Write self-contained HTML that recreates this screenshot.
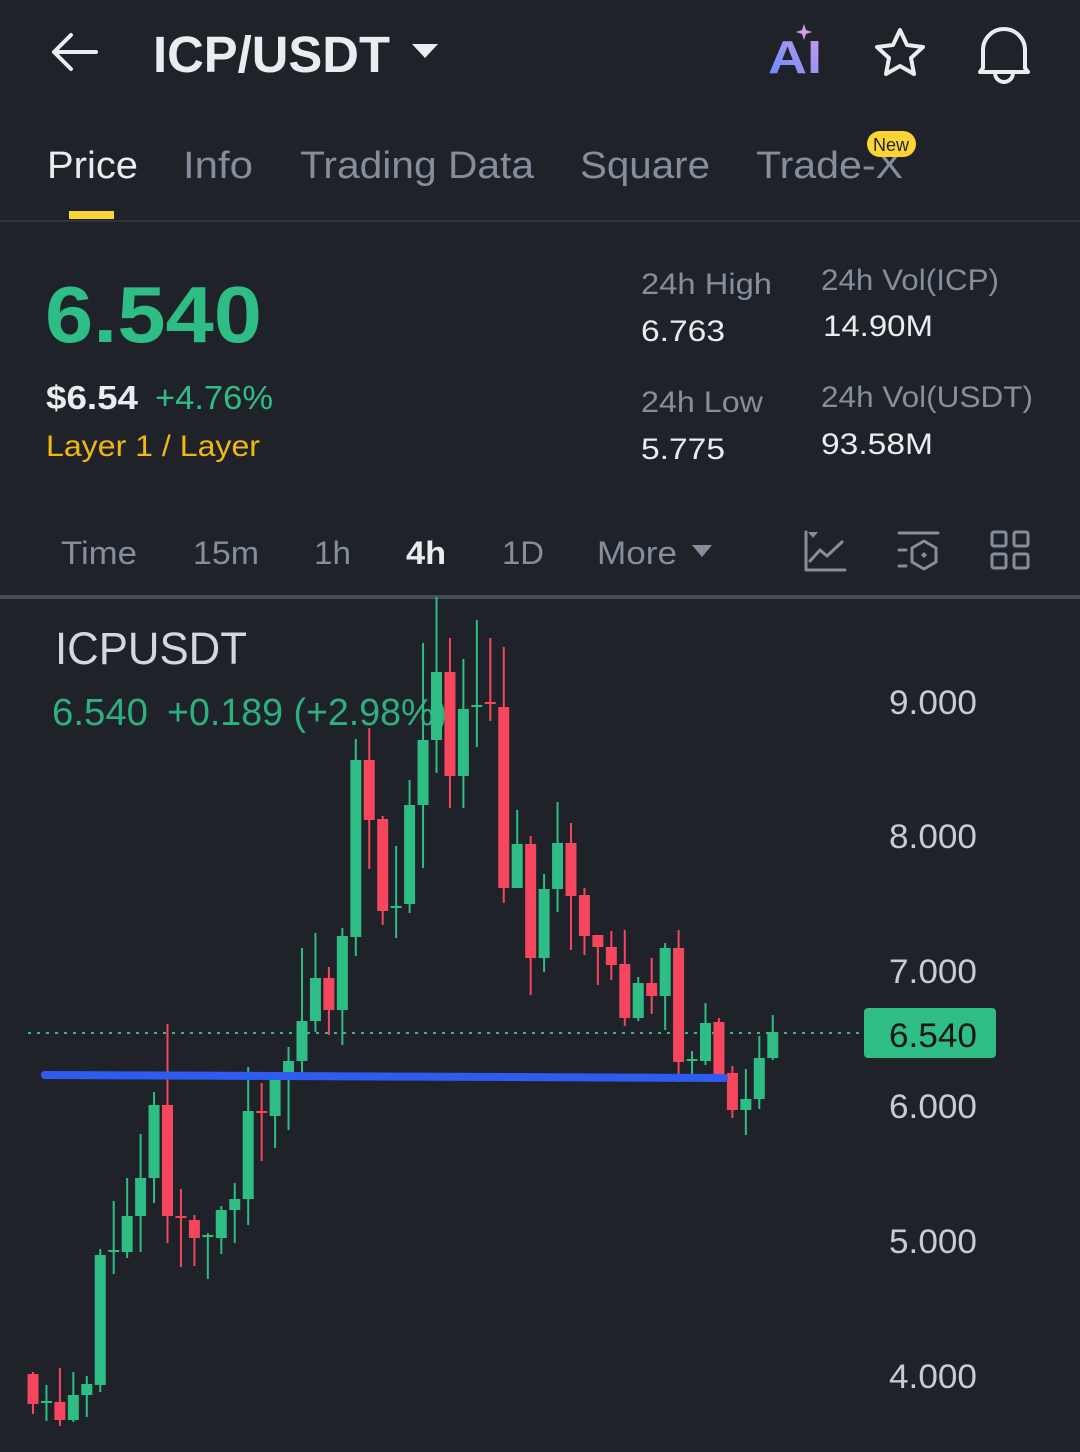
<!DOCTYPE html>
<html><head><meta charset="utf-8">
<style>
html,body{margin:0;padding:0;background:#1f2329;}
body{width:1080px;height:1452px;overflow:hidden;}
svg{display:block;font-family:"Liberation Sans",sans-serif;}
</style></head>
<body>
<svg id="s" width="1080" height="1452" viewBox="0 0 1080 1452" xmlns="http://www.w3.org/2000/svg">
<rect width="1080" height="1452" fill="#1f2329"/>
<path d="M96 52H54M54 52L71 35M54 52L71 69" stroke="#eaecef" stroke-width="4" fill="none" stroke-linecap="round" stroke-linejoin="round"/>
<text x="153" y="72" font-size="51" font-weight="700" fill="#eaecef" textLength="237" lengthAdjust="spacingAndGlyphs">ICP/USDT</text>
<path d="M412 44H438L425 58Z" fill="#eaecef"/>
<defs><linearGradient id="ai" x1="0" y1="1" x2="1" y2="0"><stop offset="0" stop-color="#5b8cff"/><stop offset="1" stop-color="#d59ae8"/></linearGradient></defs>
<text x="768" y="73" font-size="46" font-weight="700" fill="url(#ai)" textLength="54" lengthAdjust="spacingAndGlyphs">AI</text>
<path d="M804 24L806 30L812 32L806 34L804 40L802 34L796 32L802 30Z" fill="#d49be6"/>
<path d="M900 30L907 45L923 47L911 58L914 74L900 66L886 74L889 58L877 47L893 45Z" stroke="#eaecef" stroke-width="4" fill="none" stroke-linejoin="round"/>
<path d="M983 68V50A21 21 0 0 1 1025 50V68L1028 72H980Z" stroke="#eaecef" stroke-width="4" fill="none" stroke-linejoin="round"/>
<path d="M995 73A9 9 0 0 0 1013 73" stroke="#eaecef" stroke-width="4" fill="none"/>
<g font-size="38" fill="#848e9c">
<text x="47" y="178" fill="#eaecef" textLength="91" lengthAdjust="spacingAndGlyphs">Price</text>
<text x="183" y="178" textLength="70" lengthAdjust="spacingAndGlyphs">Info</text>
<text x="300" y="178" textLength="234" lengthAdjust="spacingAndGlyphs">Trading Data</text>
<text x="580" y="178" textLength="130" lengthAdjust="spacingAndGlyphs">Square</text>
<text x="756" y="178" textLength="147" lengthAdjust="spacingAndGlyphs">Trade-X</text>
</g>
<rect x="867" y="131" width="49" height="26" rx="13" fill="#fcd535"/>
<text x="891" y="151" font-size="18" fill="#1f2329" text-anchor="middle">New</text>
<rect x="69" y="211" width="45" height="8" fill="#fcd535"/>
<rect x="0" y="220" width="1080" height="2" fill="#2f3540"/>
<text x="45" y="342" font-size="80" font-weight="700" fill="#2ebd85" textLength="217" lengthAdjust="spacingAndGlyphs">6.540</text>
<text x="46" y="409" font-size="33" font-weight="700" fill="#eaecef" textLength="92" lengthAdjust="spacingAndGlyphs">$6.54</text>
<text x="155" y="409" font-size="33" fill="#2ebd85" textLength="118" lengthAdjust="spacingAndGlyphs">+4.76%</text>
<text x="46" y="456" font-size="30" fill="#f0b90b" textLength="214" lengthAdjust="spacingAndGlyphs">Layer 1 / Layer</text>
<g font-size="30" fill="#848e9c">
<text x="641" y="294" textLength="131" lengthAdjust="spacingAndGlyphs">24h High</text>
<text x="821" y="290" textLength="178" lengthAdjust="spacingAndGlyphs">24h Vol(ICP)</text>
<text x="641" y="412" textLength="122" lengthAdjust="spacingAndGlyphs">24h Low</text>
<text x="821" y="407" textLength="212" lengthAdjust="spacingAndGlyphs">24h Vol(USDT)</text>
</g>
<g font-size="30" fill="#eaecef">
<text x="641" y="341" textLength="84" lengthAdjust="spacingAndGlyphs">6.763</text>
<text x="823" y="336" textLength="110" lengthAdjust="spacingAndGlyphs">14.90M</text>
<text x="641" y="459" textLength="84" lengthAdjust="spacingAndGlyphs">5.775</text>
<text x="821" y="454" textLength="112" lengthAdjust="spacingAndGlyphs">93.58M</text>
</g>
<g font-size="32" fill="#848e9c">
<text x="61" y="564" textLength="76" lengthAdjust="spacingAndGlyphs">Time</text>
<text x="193" y="564" textLength="66" lengthAdjust="spacingAndGlyphs">15m</text>
<text x="314" y="564" textLength="37" lengthAdjust="spacingAndGlyphs">1h</text>
<text x="406" y="564" fill="#eaecef" font-weight="700" textLength="40" lengthAdjust="spacingAndGlyphs">4h</text>
<text x="502" y="564" textLength="42" lengthAdjust="spacingAndGlyphs">1D</text>
<text x="597" y="564" textLength="80" lengthAdjust="spacingAndGlyphs">More</text>
</g>
<path d="M692 545H712L702 557Z" fill="#848e9c"/>
<g stroke="#848e9c" stroke-width="3" fill="none" stroke-linecap="round" stroke-linejoin="round">
<path d="M806 532V570H845"/>
<path d="M810 561L820 550L827 556L842 542"/>
<path d="M899 533H938M899 550H906M899 566H906"/>
<path d="M924 541L936 548V562L924 569L912 562V548Z"/>
<rect x="992" y="532" width="14" height="14" rx="2"/><rect x="1014" y="532" width="14" height="14" rx="2"/>
<rect x="992" y="554" width="14" height="14" rx="2"/><rect x="1014" y="554" width="14" height="14" rx="2"/>
</g>
<path d="M808 532L813 538L818 532Z" fill="#848e9c"/>
<path d="M921 555L924 552L927 555L924 558Z" fill="#848e9c"/>
<rect x="0" y="595" width="1080" height="4" fill="#474d57"/>
<text x="55" y="664" font-size="45" fill="#d4d8dd" textLength="192" lengthAdjust="spacingAndGlyphs">ICPUSDT</text>
<g font-size="34" fill="#c7ccd2">
<text x="889" y="714" textLength="88" lengthAdjust="spacingAndGlyphs">9.000</text>
<text x="889" y="848" textLength="88" lengthAdjust="spacingAndGlyphs">8.000</text>
<text x="889" y="983" textLength="88" lengthAdjust="spacingAndGlyphs">7.000</text>
<text x="889" y="1118" textLength="88" lengthAdjust="spacingAndGlyphs">6.000</text>
<text x="889" y="1253" textLength="88" lengthAdjust="spacingAndGlyphs">5.000</text>
<text x="889" y="1388" textLength="88" lengthAdjust="spacingAndGlyphs">4.000</text>
</g>
<line x1="28" y1="1033" x2="862" y2="1033" stroke="#2ebd85" stroke-width="2" stroke-dasharray="3 6"/>
<rect x="864" y="1008" width="132" height="50" rx="4" fill="#2ebd85"/>
<text x="889" y="1047" font-size="34" fill="#111418" textLength="88" lengthAdjust="spacingAndGlyphs">6.540</text>
<g id="c"></g>
<line x1="45" y1="1075" x2="724" y2="1078" stroke="#2f5cf0" stroke-width="8" stroke-linecap="round"/>
<text x="52" y="725" font-size="38" fill="#2ebd85" fill-opacity="0.92" textLength="96" lengthAdjust="spacingAndGlyphs">6.540</text>
<text x="167" y="725" font-size="38" fill="#2ebd85" fill-opacity="0.92" textLength="280" lengthAdjust="spacingAndGlyphs">+0.189 (+2.98%)</text>
</svg>
<script>
var d=[
['r',1374,1404,1372,1414],['g',1401,1403,1385,1421],['r',1402,1420,1368,1426],['g',1395,1420,1372,1422],['g',1384,1395,1376,1417],
['g',1255,1385,1249,1392],['g',1250,1252,1201,1274],['g',1216,1252,1178,1258],['g',1178,1216,1134,1252],['g',1105,1178,1092,1203],
['r',1105,1216,1024,1243],['r',1216,1218,1189,1267],['r',1220,1238,1215,1266],['g',1235,1237,1233,1279],['g',1210,1238,1206,1254],
['g',1199,1210,1183,1243],['g',1111,1199,1067,1225],['r',1111,1113,1083,1161],['g',1077,1116,1072,1148],['g',1061,1078,1047,1130],
['g',1021,1061,948,1073],['g',978,1021,933,1032],['r',978,1010,967,1035],['g',936,1010,928,1045],['g',760,937,739,956],
['r',760,820,728,869],['r',819,911,816,925],['g',906,908,846,938],['g',805,904,780,913],['g',740,805,643,868],
['g',672,740,597,773],['r',672,776,638,808],['g',709,776,659,808],['g',705,707,620,747],['r',702,704,638,721],
['r',707,888,647,903],['g',844,888,810,888],['r',844,958,836,995],['g',889,958,874,972],['g',843,889,802,912],
['r',843,896,823,950],['r',895,936,888,955],['r',935,947,935,985],['r',947,965,931,980],['r',964,1018,930,1026],
['g',983,1018,977,1021],['r',983,996,958,1014],['g',948,996,943,1030],['r',948,1062,930,1082],['g',1059,1061,1051,1076],
['g',1023,1061,1003,1065],['r',1022,1076,1018,1077],['r',1073,1110,1066,1118],['g',1099,1110,1069,1135],['g',1058,1099,1036,1109],
['g',1032,1058,1015,1060]];
var h='';
d.forEach(function(c,i){var x=33+i*13.45;var col=c[0]=='g'?'#2ebd85':'#f6465d';
h+='<rect x="'+(x-1)+'" y="'+c[3]+'" width="2" height="'+(c[4]-c[3])+'" fill="'+col+'"/>';
h+='<rect x="'+(x-5.5)+'" y="'+c[1]+'" width="11" height="'+Math.max(2,c[2]-c[1])+'" fill="'+col+'"/>';});
document.getElementById('c').innerHTML=h;
</script>
</body></html>
